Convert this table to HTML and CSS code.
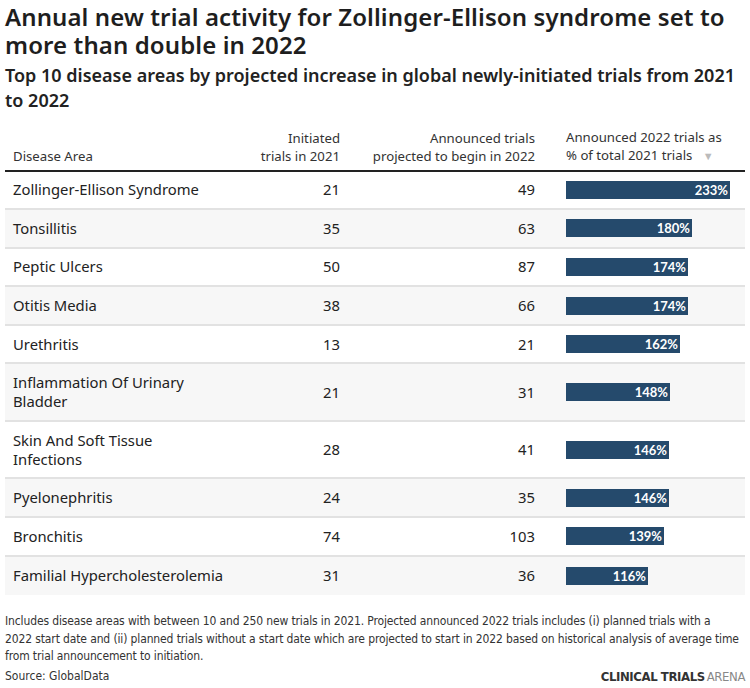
FILE: index.html
```html
<!DOCTYPE html>
<html lang="en">
<head>
<meta charset="utf-8">
<title>Annual new trial activity</title>
<link rel="stylesheet" href="styles.css">
</head>
<body>
<div class="chart">
  <h1 class="title">Annual new trial activity for Zollinger-Ellison syndrome set to more than double in 2022</h1>
  <h2 class="subtitle">Top 10 disease areas by projected increase in global newly-initiated trials from 2021 to 2022</h2>
  <div class="table">
    <div class="row head">
      <div class="cell name">Disease Area</div>
      <div class="cell num">Initiated<br>trials in 2021</div>
      <div class="cell num num2">Announced trials<br>projected to begin in 2022</div>
      <div class="cell barcol">Announced 2022 trials as<br>% of total 2021 trials <span class="sort">▼</span></div>
    </div>
    <div class="row"><div class="cell name">Zollinger-Ellison Syndrome</div><div class="cell num">21</div><div class="cell num num2">49</div><div class="cell barcol"><div class="bar" style="width:164px">233%</div></div></div>
    <div class="row alt"><div class="cell name">Tonsillitis</div><div class="cell num">35</div><div class="cell num num2">63</div><div class="cell barcol"><div class="bar" style="width:126px">180%</div></div></div>
    <div class="row"><div class="cell name">Peptic Ulcers</div><div class="cell num">50</div><div class="cell num num2">87</div><div class="cell barcol"><div class="bar" style="width:122px">174%</div></div></div>
    <div class="row alt"><div class="cell name">Otitis Media</div><div class="cell num">38</div><div class="cell num num2">66</div><div class="cell barcol"><div class="bar" style="width:122px">174%</div></div></div>
    <div class="row"><div class="cell name">Urethritis</div><div class="cell num">13</div><div class="cell num num2">21</div><div class="cell barcol"><div class="bar" style="width:114px">162%</div></div></div>
    <div class="row alt tall"><div class="cell name">Inflammation Of Urinary<br>Bladder</div><div class="cell num">21</div><div class="cell num num2">31</div><div class="cell barcol"><div class="bar" style="width:104px">148%</div></div></div>
    <div class="row tall"><div class="cell name">Skin And Soft Tissue<br>Infections</div><div class="cell num">28</div><div class="cell num num2">41</div><div class="cell barcol"><div class="bar" style="width:103px">146%</div></div></div>
    <div class="row alt"><div class="cell name">Pyelonephritis</div><div class="cell num">24</div><div class="cell num num2">35</div><div class="cell barcol"><div class="bar" style="width:103px">146%</div></div></div>
    <div class="row"><div class="cell name">Bronchitis</div><div class="cell num">74</div><div class="cell num num2">103</div><div class="cell barcol"><div class="bar" style="width:98px">139%</div></div></div>
    <div class="row alt last"><div class="cell name">Familial Hypercholesterolemia</div><div class="cell num">31</div><div class="cell num num2">36</div><div class="cell barcol"><div class="bar" style="width:82px">116%</div></div></div>
  </div>
  <p class="notes">Includes disease areas with between 10 and 250 new trials in 2021. Projected announced 2022 trials includes (i) planned trials with a<br>2022 start date and (ii) planned trials without a start date which are projected to start in 2022 based on historical analysis of average time<br>from trial announcement to initiation.</p>
  <div class="footer">
    <span class="source">Source: GlobalData</span>
    <span class="brand"><b>CLINICAL TRIALS</b>ARENA</span>
  </div>
</div>
</body>
</html>
```

FILE: styles.css
```css
html, body {
  margin: 0;
  padding: 0;
  background: #fff;
}
body {
  font-family: "Noto Sans", "Open Sans", sans-serif;
  color: #222;
}
.chart {
  padding: 3px 5px 0 5px;
  width: 740px;
}
.title {
  margin: 0;
  font-size: 24px;
  letter-spacing: 0.1px;
  line-height: 28px;
  font-weight: 600;
  color: #1e1e1e;
}
.subtitle {
  margin: 3.5px 0 0 0;
  font-size: 18px;
  line-height: 25px;
  font-weight: 600;
  color: #222;
}
.table {
  margin-top: 15px;
}
.row {
  display: grid;
  grid-template-columns: 245px 98px 202px 195px;
  align-items: center;
  height: 38.6px;
  box-sizing: border-box;
  border-bottom: 2px solid #e2e2e2;
  font-size: 14.8px;
  line-height: 19px;
}
.row.tall { height: 57.5px; }
.row.alt { background: #f7f7f7; }
.row.last { border-bottom: none; }
.row.head {
  height: auto;
  align-items: end;
  border-bottom: 2px solid #222;
  font-size: 13.2px;
  line-height: 18px;
  color: #333;
  padding-bottom: 5px;
}
.cell { padding: 0 8px; }
.num { text-align: right; }
.num2 { padding-right: 15px; }
.barcol { padding-left: 16px; padding-right: 0; }
.sort {
  color: #bbb;
  font-size: 11px;
  margin-left: 7px;
}
.bar {
  height: 18px;
  background: #254a6c;
  color: #fff;
  font-family: "Lato", sans-serif;
  font-weight: 700;
  font-size: 13px;
  line-height: 18px;
  text-align: right;
  padding-right: 2px;
  box-sizing: border-box;
}
.notes {
  margin: 18px 0 0 0;
  font-family: "Liberation Sans Narrow", "DejaVu Sans Condensed", sans-serif;
  font-stretch: condensed;
  font-size: 12px;
  letter-spacing: -0.13px;
  line-height: 17.5px;
  color: #333;
  white-space: nowrap;
}
.footer {
  display: flex;
  justify-content: space-between;
  margin-top: 2px;
  font-family: "Liberation Sans Narrow", "DejaVu Sans Condensed", sans-serif;
  font-stretch: condensed;
  font-size: 12px;
  line-height: 17.5px;
  color: #333;
}
.brand {
  color: #888;
  font-size: 13px;
  letter-spacing: -0.4px;
}
.brand b { color: #333; margin-right: 2px; }
```
